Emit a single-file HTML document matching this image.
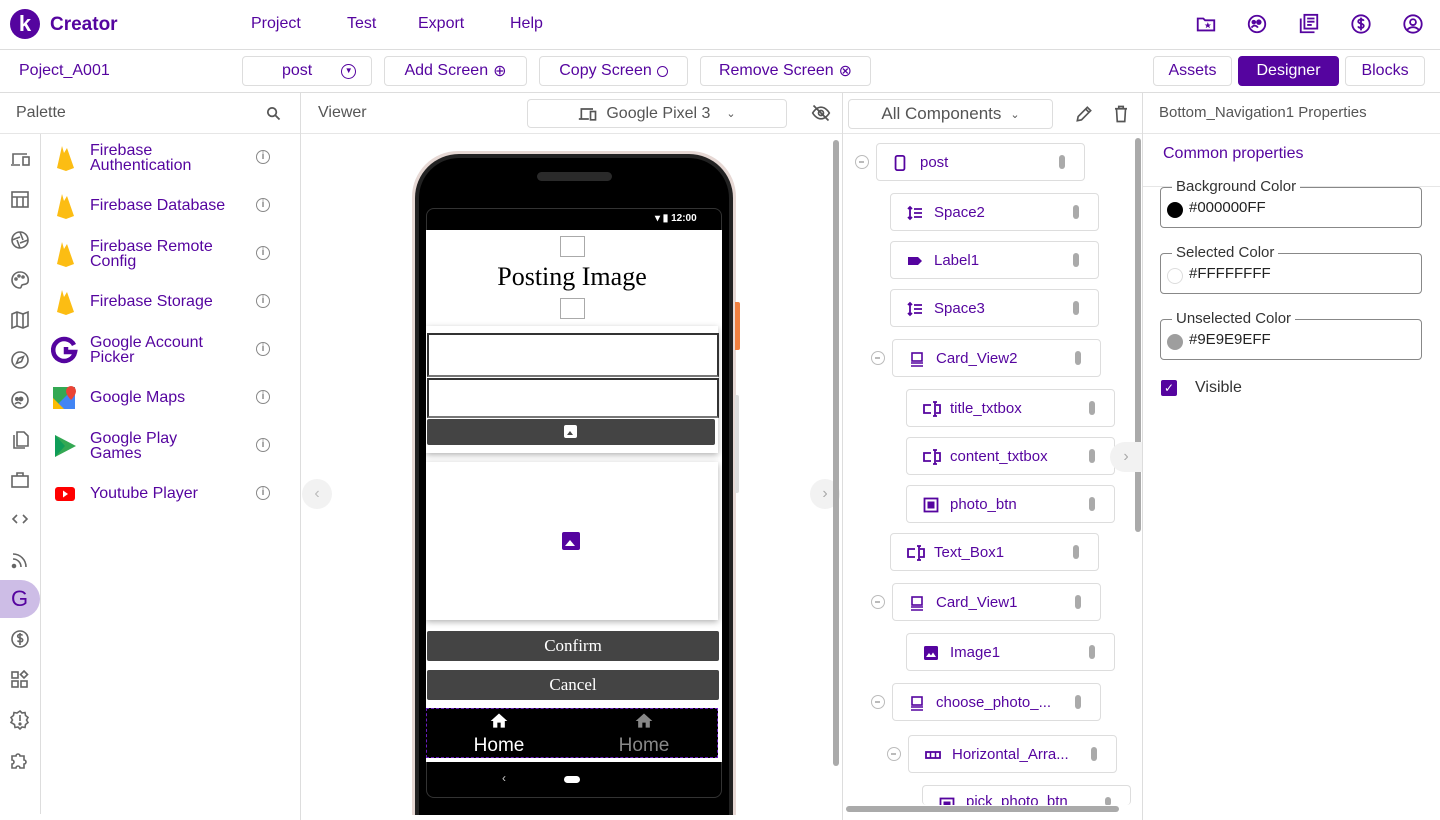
<!DOCTYPE html>
<html style="overflow:hidden;width:1440px;height:820px"><head><meta charset="utf-8"><style>
*{margin:0;padding:0;box-sizing:border-box}
body{width:1440px;height:820px;overflow:hidden;background:#fff;font-family:"Liberation Sans",sans-serif;color:#5a0fa5;position:relative}
.a{position:absolute}
.p{color:#55049f}
.btn{position:absolute;border:1px solid #ddd;border-radius:4px;font-size:16px;color:#55049f;display:flex;align-items:center;justify-content:center;gap:5px}
.hl{position:absolute;background:#ddd}
.ic{position:absolute}
.row{position:absolute;height:38px;width:209px;border:1px solid #ddd;border-radius:4px;font-size:15px;color:#55049f;display:flex;align-items:center}
.row .t{position:absolute;left:43px}
.row .ico{position:absolute;left:16px;top:11px}
.row .h{position:absolute;right:19px;top:11px;width:6px;height:14px;border-radius:3px;background:#aaa}
.col{position:absolute;width:14px;height:14px;border:1.5px solid #bbb;border-radius:50%}
.col:after{content:"";position:absolute;left:3px;top:5px;width:5px;height:1.5px;background:#bbb}
.pal{position:absolute;left:90px;font-size:16px;color:#55049f;line-height:15px}
.info{position:absolute;left:256px;width:14px;height:14px;border:1.5px solid #888;border-radius:50%;font-size:10px;color:#888;text-align:center;line-height:11px;font-weight:bold}
.fs{position:absolute;left:1160px;width:262px;height:41px;border:1px solid #888;border-radius:4px}
.fs .lg{position:absolute;left:11px;top:-10px;background:#fff;padding:0 4px;font-size:15px;color:#333}
.fs .dot{position:absolute;left:6px;top:14px;width:16px;height:16px;border-radius:50%}
.fs .v{position:absolute;left:28px;top:11px;font-size:15px;color:#222}
</style></head><body>

<!-- header -->
<div class="a" style="left:10px;top:9px;width:30px;height:30px;border-radius:50%;background:#55049f;color:#fff;font-weight:bold;font-size:22px;text-align:center;line-height:29px">k</div>
<div class="a p" style="left:50px;top:14px;font-size:19px;font-weight:bold">Creator</div>
<div class="a p" style="left:251px;top:15px;font-size:16px">Project</div>
<div class="a p" style="left:347px;top:15px;font-size:16px">Test</div>
<div class="a p" style="left:418px;top:15px;font-size:16px">Export</div>
<div class="a p" style="left:510px;top:15px;font-size:16px">Help</div>
<svg class="ic" style="left:1195px;top:13px" width="22" height="22" viewBox="0 0 24 24" fill="none" stroke="#55049f" stroke-width="2"><path d="M3 6h6l2 2h10v11H3z"/><path d="M14 10l1 2.5h2.5l-2 1.5.8 2.5-2.3-1.5-2.3 1.5.8-2.5-2-1.5H13z" fill="#55049f" stroke="none"/></svg>
<svg class="ic" style="left:1246px;top:13px" width="22" height="22" viewBox="0 0 24 24" fill="none" stroke="#55049f" stroke-width="2"><circle cx="12" cy="12" r="9"/><circle cx="8.5" cy="10" r="1.5" fill="#55049f"/><circle cx="14" cy="10" r="2" fill="#55049f"/><path d="M6 16c2-3 5-3 7 0" /></svg>
<svg class="ic" style="left:1298px;top:13px" width="22" height="22" viewBox="0 0 24 24" fill="none" stroke="#55049f" stroke-width="2"><path d="M3 6v15h15"/><rect x="7" y="2" width="14" height="15"/><path d="M10 6h8M10 9.5h8M10 13h5"/></svg>
<svg class="ic" style="left:1350px;top:13px" width="22" height="22" viewBox="0 0 24 24" fill="none" stroke="#55049f" stroke-width="2"><circle cx="12" cy="12" r="9.5"/><path d="M15 8.5c-.5-1-1.7-1.5-3-1.5-1.8 0-3 .9-3 2.3 0 3 6 1.7 6 4.7 0 1.4-1.3 2.3-3 2.3-1.5 0-2.7-.6-3.2-1.7M12 5v14"/></svg>
<svg class="ic" style="left:1402px;top:13px" width="22" height="22" viewBox="0 0 24 24" fill="none" stroke="#55049f" stroke-width="2"><circle cx="12" cy="12" r="9.5"/><circle cx="12" cy="10" r="3.2"/><path d="M5.5 18.5c3.5-4 9.5-4 13 0"/></svg>
<div class="hl" style="left:0;top:49px;width:1440px;height:1px"></div>

<!-- toolbar -->
<div class="a p" style="left:19px;top:62px;font-size:16px">Poject_A001</div>
<div class="btn" style="left:242px;top:56px;width:130px;height:30px;justify-content:flex-start;padding-left:39px">post <span style="margin-left:24px;display:inline-block;width:15px;height:15px;border:1.5px solid #55049f;border-radius:50%;font-size:8px;line-height:11px;text-align:center">▼</span></div>
<div class="btn" style="left:384px;top:56px;width:143px;height:30px">Add Screen <span style="font-size:16px">⊕</span></div>
<div class="btn" style="left:539px;top:56px;width:149px;height:30px">Copy Screen <span style="display:inline-block;width:11px;height:11px;border:1.5px solid #55049f;border-radius:50%"></span></div>
<div class="btn" style="left:700px;top:56px;width:171px;height:30px">Remove Screen <span style="font-size:16px">⊗</span></div>
<div class="btn" style="left:1153px;top:56px;width:79px;height:30px">Assets</div>
<div class="btn" style="left:1238px;top:56px;width:101px;height:30px;background:#55049f;color:#fff;border-color:#55049f">Designer</div>
<div class="btn" style="left:1345px;top:56px;width:80px;height:30px">Blocks</div>
<div class="hl" style="left:0;top:92px;width:1440px;height:1px"></div>

<!-- panel headers -->
<div class="a" style="left:16px;top:104px;font-size:16px;color:#555">Palette</div>
<svg class="ic" style="left:265px;top:105px" width="17" height="17" viewBox="0 0 24 24" fill="none" stroke="#555" stroke-width="2.5"><circle cx="10" cy="10" r="6"/><path d="M14.5 14.5l6 6"/></svg>
<div class="a" style="left:318px;top:104px;font-size:16px;color:#555">Viewer</div>
<div class="btn" style="left:527px;top:99px;width:260px;height:29px;color:#555;gap:8px"><svg width="20" height="16" viewBox="0 0 24 18" fill="none" stroke="#555" stroke-width="2"><path d="M4 14V3h14M1 15h12"/><rect x="15" y="6" width="6" height="10"/></svg>Google Pixel 3 <span style="font-size:11px;margin-left:8px">⌄</span></div>
<svg class="ic" style="left:811px;top:103px" width="20" height="20" viewBox="0 0 24 24" fill="none" stroke="#555" stroke-width="2"><path d="M2 12s4-7 10-7 10 7 10 7-4 7-10 7S2 12 2 12z"/><circle cx="12" cy="12" r="3"/><path d="M3 3l18 18"/></svg>
<div class="btn" style="left:848px;top:99px;width:205px;height:30px;color:#555;font-size:17px">All Components <span style="font-size:11px;margin-left:4px">⌄</span></div>
<svg class="ic" style="left:1074px;top:104px" width="20" height="20" viewBox="0 0 24 24" fill="none" stroke="#555" stroke-width="2"><path d="M4 20l1-5L16 4l4 4L9 19z M14 6l4 4"/></svg>
<svg class="ic" style="left:1112px;top:104px" width="18" height="20" viewBox="0 0 24 24" fill="none" stroke="#555" stroke-width="2.2"><path d="M4 5h16M9 5V2h6v3M6 5l1 17h10l1-17"/></svg>
<div class="a" style="left:1159px;top:104px;font-size:15px;color:#555">Bottom_Navigation1 Properties</div>
<div class="hl" style="left:0;top:133px;width:1440px;height:1px;background:#e6e6e6"></div>
<div class="hl" style="left:300px;top:93px;width:1px;height:727px"></div>
<div class="hl" style="left:842px;top:93px;width:1px;height:727px"></div>
<div class="hl" style="left:1142px;top:93px;width:1px;height:727px"></div>
<div class="hl" style="left:40px;top:134px;width:1px;height:680px"></div>

<!-- icon strip -->
<div class="a" style="left:0;top:580px;width:40px;height:38px;background:#cdbde6;border-radius:0 19px 19px 0"></div>
<div class="a" style="left:11px;top:586px;font-size:22px;color:#55049f">G</div>
<svg class="a" style="left:0;top:0" width="40" height="800" fill="none" stroke="#666" stroke-width="1.6">
<g transform="translate(11,151)"><path d="M2 13V3h14M0 14h9"/><rect x="12" y="6" width="6" height="8"/></g>
<g transform="translate(11,191)"><rect x="1" y="1" width="16" height="15"/><path d="M1 6h16M6 6v10M12 6v10"/></g>
<g transform="translate(11,231)"><circle cx="9" cy="9" r="8"/><path d="M9 1l3 8M17 9l-8 3M9 17l-3-8M1 9l8-3"/></g>
<g transform="translate(11,271)"><path d="M9 1a8 8 0 1 0 0 16c1.5 0 1-2 2-3s5 0 6-3A8 8 0 0 0 9 1z"/><circle cx="5" cy="8" r="1"/><circle cx="8" cy="5" r="1"/><circle cx="12" cy="6" r="1"/></g>
<g transform="translate(11,311)"><path d="M1 3l5-2 6 2 5-2v14l-5 2-6-2-5 2zM6 1v14M12 3v14"/></g>
<g transform="translate(11,351)"><circle cx="9" cy="9" r="8"/><path d="M12.5 5.5l-2 5-5 2 2-5z"/></g>
<g transform="translate(11,391)"><circle cx="9" cy="9" r="8"/><circle cx="6" cy="8" r="1.2" fill="#666"/><circle cx="10" cy="8" r="1.6" fill="#666"/><path d="M4 13c2-2 4-2 6 0"/></g>
<g transform="translate(11,431)"><path d="M3 4v13h11"/><path d="M6 1h7l4 4v10H6z"/></g>
<g transform="translate(11,471)"><rect x="1" y="5" width="16" height="11"/><path d="M6 5V2h6v3"/></g>
<g transform="translate(11,511)"><path d="M6 4L2 8l4 4M12 4l4 4-4 4"/></g>
<g transform="translate(11,551)"><path d="M2 8a8 8 0 0 1 8 8M2 3a13 13 0 0 1 13 13"/><circle cx="3" cy="15" r="1.5" fill="#666"/></g>
<g transform="translate(11,631)"><circle cx="9" cy="8" r="8"/><path d="M11.5 4.5c-.5-.8-1.4-1-2.5-1-1.4 0-2.3.7-2.3 1.7 0 2.4 5 1.3 5 3.8 0 1.1-1 1.8-2.5 1.8-1.1 0-2.2-.5-2.6-1.3M9 2v12"/></g>
<g transform="translate(11,671)"><rect x="1" y="1" width="6" height="6"/><rect x="1" y="10" width="6" height="6"/><rect x="10" y="10" width="6" height="6"/><path d="M13 0l3.5 3.5L13 7 9.5 3.5z"/></g>
<g transform="translate(11,711)"><path d="M9 0l2 2 3-.5.5 3 2.5 2-1.5 2.5 1.5 2.5-2.5 2-.5 3-3-.5-2 2-2-2-3 .5-.5-3L0 11.5 1.5 9 0 6.5l2.5-2 .5-3 3 .5z"/><path d="M9 4v6"/><circle cx="9" cy="13" r=".8" fill="#666"/></g>
<g transform="translate(11,751)"><path d="M1 5h4a2 2 0 1 1 4 0h4v4a2 2 0 1 1 0 4v4H9a2 2 0 1 0-4 0H1v-4a2 2 0 1 0 0-4z"/></g>
</svg>

<!-- palette -->
<svg class="a" style="left:0;top:0" width="80" height="520">
<g fill="#fcbd13"><path d="M57 168l5-22 2 7 3-5 7 20-8 3z"/><path d="M57 216l5-22 2 7 3-5 7 20-8 3z"/><path d="M57 264l5-22 2 7 3-5 7 20-8 3z"/><path d="M57 312l5-22 2 7 3-5 7 20-8 3z"/></g>
<path d="M74 345a11 11 0 1 0 1 7h-9v-5" fill="none" stroke="#55049f" stroke-width="4.5"/>
<rect x="53" y="387" width="22" height="22" fill="#34a853"/><path d="M53 409l22-22v22z" fill="#4285f4"/><path d="M53 398l11 11H53z" fill="#fbbc04"/><path d="M71 386a5 5 0 0 0-5 5c0 4 5 9 5 9s5-5 5-9a5 5 0 0 0-5-5z" fill="#ea4335"/>
<path d="M55 435l21 11-21 11z" fill="#34a853"/><path d="M55 435l10 11-10 11z" fill="#0f9d58"/>
<rect x="55" y="487" width="20" height="14" rx="3" fill="#f00"/><path d="M63 490.5l5 3.5-5 3.5z" fill="#fff"/>
</svg>
<div class="pal" style="top:143px">Firebase<br>Authentication</div>
<div class="pal" style="top:198px">Firebase Database</div>
<div class="pal" style="top:239px">Firebase Remote<br>Config</div>
<div class="pal" style="top:294px">Firebase Storage</div>
<div class="pal" style="top:335px">Google Account<br>Picker</div>
<div class="pal" style="top:390px">Google Maps</div>
<div class="pal" style="top:431px">Google Play<br>Games</div>
<div class="pal" style="top:486px">Youtube Player</div>
<div class="info" style="top:150px">i</div><div class="info" style="top:198px">i</div><div class="info" style="top:246px">i</div><div class="info" style="top:294px">i</div><div class="info" style="top:342px">i</div><div class="info" style="top:390px">i</div><div class="info" style="top:438px">i</div><div class="info" style="top:486px">i</div>

<!-- viewer arrows and scrollbar -->
<div class="a" style="left:302px;top:479px;width:30px;height:30px;border-radius:50%;background:#f2f2f2;color:#bbb;text-align:center;line-height:29px;font-size:16px">‹</div>
<div class="a" style="left:810px;top:479px;width:30px;height:30px;border-radius:50%;background:#f2f2f2;color:#aaa;text-align:center;line-height:29px;font-size:16px">›</div>
<div class="a" style="left:833px;top:140px;width:6px;height:626px;border-radius:3px;background:#aaa"></div>

<!-- phone -->
<div class="a" style="left:412px;top:151px;width:324px;height:664px;border-radius:46px 46px 0 0;background:#e6d8d4"></div>
<div class="a" style="left:415px;top:154px;width:318px;height:661px;border-radius:44px 44px 0 0;background:#222"></div>
<div class="a" style="left:419px;top:158px;width:310px;height:657px;border-radius:40px 40px 0 0;background:#000"></div>
<div class="a" style="left:735px;top:302px;width:5px;height:48px;background:#f08040;border-radius:0 2px 2px 0"></div>
<div class="a" style="left:735px;top:395px;width:4px;height:98px;background:#ddd;border-radius:0 2px 2px 0"></div>
<div class="a" style="left:537px;top:172px;width:75px;height:9px;border-radius:5px;background:#2a2a2a"></div>
<div class="a" style="left:426px;top:208px;width:296px;height:590px;background:#000;border-radius:8px;border:1px solid #333"></div>
<div class="a" style="left:655px;top:213px;color:#fff;font-size:10px;font-weight:bold">▾ ▮ 12:00</div>
<div class="a" style="left:426px;top:230px;width:296px;height:532px;background:#fff"></div>
<div class="a" style="left:560px;top:236px;width:25px;height:21px;border:1px solid #aaa"></div>
<div class="a" style="left:426px;top:262px;width:292px;text-align:center;font-family:'Liberation Serif',serif;font-size:26px;color:#000">Posting Image</div>
<div class="a" style="left:560px;top:298px;width:25px;height:21px;border:1px solid #aaa"></div>
<div class="a" style="left:426px;top:326px;width:292px;height:127px;background:#fff;box-shadow:0 2px 6px rgba(0,0,0,.3)"></div>
<div class="a" style="left:427px;top:333px;width:292px;height:44px;border:2px solid #333;border-bottom-color:#777;background:#fff"></div>
<div class="a" style="left:427px;top:378px;width:292px;height:40px;border:2px solid #333;border-bottom-color:#777;background:#fff"></div>
<div class="a" style="left:427px;top:419px;width:288px;height:26px;background:#444;border-radius:2px"></div>
<div class="a" style="left:564px;top:425px;width:13px;height:13px;background:#fff;border-radius:2px"><div style="position:absolute;left:3px;top:6px;width:0;height:0;border-left:3px solid transparent;border-right:3px solid transparent;border-bottom:4px solid #444"></div></div>
<div class="a" style="left:426px;top:462px;width:292px;height:158px;background:#fff;box-shadow:0 2px 6px rgba(0,0,0,.3)"></div>
<div class="a" style="left:562px;top:532px;width:18px;height:18px;background:#55049f;border-radius:2px"><div style="position:absolute;left:3px;top:8px;width:0;height:0;border-left:5px solid transparent;border-right:5px solid transparent;border-bottom:6px solid #fff"></div></div>
<div class="a" style="left:427px;top:631px;width:292px;height:30px;background:#444;border-radius:2px;color:#fff;font-family:'Liberation Serif',serif;font-size:17px;text-align:center;line-height:30px">Confirm</div>
<div class="a" style="left:427px;top:670px;width:292px;height:30px;background:#444;border-radius:2px;color:#fff;font-family:'Liberation Serif',serif;font-size:17px;text-align:center;line-height:30px">Cancel</div>
<div class="a" style="left:426px;top:708px;width:292px;height:50px;background:#000;border:1px dashed #6a1ec0"></div>
<svg class="a" style="left:488px;top:711px" width="22" height="20" viewBox="0 0 24 24"><path d="M10 20v-6h4v6h5v-8h3L12 3 2 12h3v8z" fill="#fff"/></svg>
<svg class="a" style="left:633px;top:711px" width="22" height="20" viewBox="0 0 24 24"><path d="M10 20v-6h4v6h5v-8h3L12 3 2 12h3v8z" fill="#888"/></svg>
<div class="a" style="left:426px;top:735px;width:146px;text-align:center;color:#fff;font-size:19px">Home</div>
<div class="a" style="left:571px;top:735px;width:146px;text-align:center;color:#888;font-size:19px">Home</div>
<div class="a" style="left:502px;top:771px;color:#ccc;font-size:12px">‹</div>
<div class="a" style="left:564px;top:776px;width:16px;height:7px;border-radius:4px;background:#fff"></div>

<!-- components tree -->
<div class="col" style="left:855px;top:155px"></div>
<div class="col" style="left:871px;top:351px"></div>
<div class="col" style="left:871px;top:595px"></div>
<div class="col" style="left:871px;top:695px"></div>
<div class="col" style="left:887px;top:747px"></div>

<div class="row" style="left:876px;top:143px"><svg class="ico" width="14" height="16" viewBox="0 0 14 18"><rect x="2" y="1" width="10" height="16" rx="2" fill="none" stroke="#55049f" stroke-width="2"/></svg><span class="t">post</span><i class="h"></i></div>
<div class="row" style="left:890px;top:193px"><svg class="ico" width="16" height="16" viewBox="0 0 16 16" fill="none" stroke="#55049f" stroke-width="1.8"><path d="M3 2v12M1 4l2-2 2 2M1 12l2 2 2-2M7 4h8M7 8h8M7 12h8"/></svg><span class="t">Space2</span><i class="h"></i></div>
<div class="row" style="left:890px;top:241px"><svg class="ico" width="16" height="16" viewBox="0 0 16 16"><path d="M1 4h10l4 4-4 4H1z" fill="#55049f"/></svg><span class="t">Label1</span><i class="h"></i></div>
<div class="row" style="left:890px;top:289px"><svg class="ico" width="16" height="16" viewBox="0 0 16 16" fill="none" stroke="#55049f" stroke-width="1.8"><path d="M3 2v12M1 4l2-2 2 2M1 12l2 2 2-2M7 4h8M7 8h8M7 12h8"/></svg><span class="t">Space3</span><i class="h"></i></div>
<div class="row" style="left:892px;top:339px"><svg class="ico" width="16" height="16" viewBox="0 0 16 16" fill="none" stroke="#55049f" stroke-width="1.6"><rect x="3" y="2" width="10" height="8"/><path d="M2 12h12M2 15h12"/></svg><span class="t">Card_View2</span><i class="h"></i></div>
<div class="row" style="left:906px;top:389px"><svg class="ico" width="18" height="16" viewBox="0 0 18 16" fill="none" stroke="#55049f" stroke-width="1.8"><path d="M8 4H1v8h7M13 4h4v8h-4M10 1h4M10 15h4M12 1v14"/></svg><span class="t">title_txtbox</span><i class="h"></i></div>
<div class="row" style="left:906px;top:437px"><svg class="ico" width="18" height="16" viewBox="0 0 18 16" fill="none" stroke="#55049f" stroke-width="1.8"><path d="M8 4H1v8h7M13 4h4v8h-4M10 1h4M10 15h4M12 1v14"/></svg><span class="t">content_txtbox</span><i class="h"></i></div>
<div class="row" style="left:906px;top:485px"><svg class="ico" width="16" height="16" viewBox="0 0 16 16"><rect x="1.5" y="1.5" width="13" height="13" fill="none" stroke="#55049f" stroke-width="1.8"/><rect x="4.5" y="4.5" width="7" height="7" fill="#55049f"/></svg><span class="t">photo_btn</span><i class="h"></i></div>
<div class="row" style="left:890px;top:533px"><svg class="ico" width="18" height="16" viewBox="0 0 18 16" fill="none" stroke="#55049f" stroke-width="1.8"><path d="M8 4H1v8h7M13 4h4v8h-4M10 1h4M10 15h4M12 1v14"/></svg><span class="t">Text_Box1</span><i class="h"></i></div>
<div class="row" style="left:892px;top:583px"><svg class="ico" width="16" height="16" viewBox="0 0 16 16" fill="none" stroke="#55049f" stroke-width="1.6"><rect x="3" y="2" width="10" height="8"/><path d="M2 12h12M2 15h12"/></svg><span class="t">Card_View1</span><i class="h"></i></div>
<div class="row" style="left:906px;top:633px"><svg class="ico" width="16" height="16" viewBox="0 0 16 16"><rect x="1" y="1" width="14" height="14" rx="1.5" fill="#55049f"/><path d="M3 12l3-4 2 2.5 2-3 3 4.5z" fill="#fff"/></svg><span class="t">Image1</span><i class="h"></i></div>
<div class="row" style="left:892px;top:683px"><svg class="ico" width="16" height="16" viewBox="0 0 16 16" fill="none" stroke="#55049f" stroke-width="1.6"><rect x="3" y="2" width="10" height="8"/><path d="M2 12h12M2 15h12"/></svg><span class="t">choose_photo_...</span><i class="h"></i></div>
<div class="row" style="left:908px;top:735px"><svg class="ico" width="16" height="16" viewBox="0 0 16 16"><rect x="1" y="5" width="14" height="6" fill="none" stroke="#55049f" stroke-width="1.8"/><path d="M5.5 5v6M10.5 5v6" stroke="#55049f" stroke-width="1.5"/></svg><span class="t">Horizontal_Arra...</span><i class="h"></i></div>
<div class="row" style="left:922px;top:785px;height:20px;border-bottom:none;overflow:hidden;align-items:flex-start"><svg class="ico" width="16" height="9" viewBox="0 0 16 9" style="top:11px"><rect x="1.5" y="1.5" width="13" height="13" fill="none" stroke="#55049f" stroke-width="1.8"/><rect x="4.5" y="4.5" width="7" height="7" fill="#55049f"/></svg><span class="t" style="top:7px;height:13px;overflow:hidden;line-height:18px">pick_photo_btn</span><i class="h" style="height:9px"></i></div>
<div class="a" style="left:846px;top:806px;width:273px;height:6px;border-radius:3px;background:#aaa"></div>
<div class="a" style="left:1135px;top:138px;width:6px;height:394px;border-radius:3px;background:#aaa"></div>
<div class="a" style="left:1110px;top:442px;width:32px;height:30px;border-radius:15px 0 0 15px;background:#f2f2f2;color:#aaa;text-align:center;line-height:29px;font-size:16px">›</div>

<!-- properties -->
<div class="a p" style="left:1163px;top:145px;font-size:16px">Common properties</div>
<div class="hl" style="left:1143px;top:186px;width:297px;height:1px;background:#e6e6e6"></div>
<div class="fs" style="top:187px"><span class="lg">Background Color</span><i class="dot" style="background:#000"></i><span class="v">#000000FF</span></div>
<div class="fs" style="top:253px"><span class="lg">Selected Color</span><i class="dot" style="background:#fff;border:1px solid #ddd"></i><span class="v">#FFFFFFFF</span></div>
<div class="fs" style="top:319px"><span class="lg">Unselected Color</span><i class="dot" style="background:#9e9e9e"></i><span class="v">#9E9E9EFF</span></div>
<div class="a" style="left:1161px;top:380px;width:16px;height:16px;background:#55049f;border-radius:2px;color:#fff;font-size:12px;text-align:center;line-height:16px">✓</div>
<div class="a" style="left:1195px;top:379px;font-size:16px;color:#333">Visible</div>
</body></html>
